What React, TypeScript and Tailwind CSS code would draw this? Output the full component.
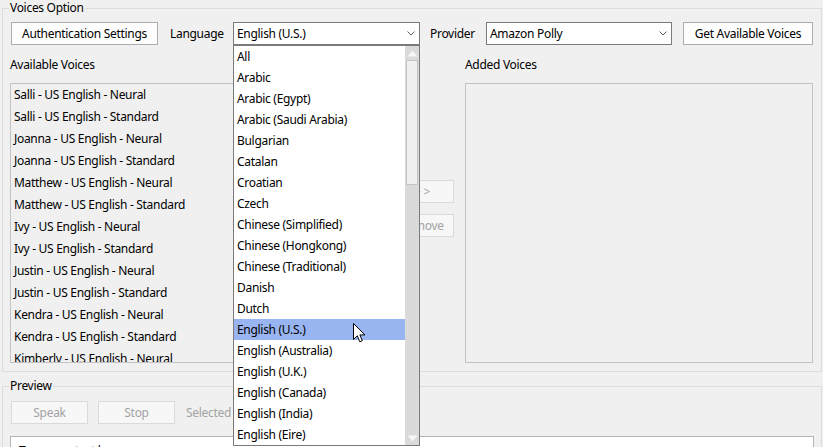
const languages = [
  'All',
  'Arabic',
  'Arabic (Egypt)',
  'Arabic (Saudi Arabia)',
  'Bulgarian',
  'Catalan',
  'Croatian',
  'Czech',
  'Chinese (Simplified)',
  'Chinese (Hongkong)',
  'Chinese (Traditional)',
  'Danish',
  'Dutch',
  'English (U.S.)',
  'English (Australia)',
  'English (U.K.)',
  'English (Canada)',
  'English (India)',
  'English (Eire)',
];

const voices = [
  'Salli - US English - Neural',
  'Salli - US English - Standard',
  'Joanna - US English - Neural',
  'Joanna - US English - Standard',
  'Matthew - US English - Neural',
  'Matthew - US English - Standard',
  'Ivy - US English - Neural',
  'Ivy - US English - Standard',
  'Justin - US English - Neural',
  'Justin - US English - Standard',
  'Kendra - US English - Neural',
  'Kendra - US English - Standard',
  'Kimberly - US English - Neural',
  'Kimberly - US English - Standard',
];

function Chevron() {
  return (
    <svg width="8" height="5" viewBox="0 0 8 5" className="shrink-0">
      <polyline points="0.5,0.5 4,4 7.5,0.5" fill="none" stroke="#606060" strokeWidth="1" />
    </svg>
  );
}

function Combo({ value, width }: { value: string; width: string }) {
  return (
    <div className={`${width} flex h-[23px] items-center justify-between border border-[#7a7a7a] bg-white pl-[3px] pr-[4px]`}>
      <span className="whitespace-nowrap">{value}</span>
      <Chevron />
    </div>
  );
}

function Button({ label, width, disabled }: { label: string; width: string; disabled?: boolean }) {
  return (
    <div
      className={`${width} flex h-[23px] shrink-0 items-center justify-center whitespace-nowrap border ${
        disabled ? 'border-[#dadada] bg-[#f7f7f7] text-[#a3a3a3]' : 'border-[#adadad] bg-[#fdfdfd]'
      }`}
    >
      {label}
    </div>
  );
}

export default function App() {
  return (
    <div className="relative h-[447px] w-[823px] overflow-hidden bg-[#f0f0f0] font-['Noto_Sans',sans-serif] text-[12px] leading-[16px] tracking-[-0.3px] text-black">
      <fieldset className="mx-[2px] w-[820px] min-w-0 border border-[#dcdcdc] px-[7px] pb-[8px]">
        <legend className="-ml-[1px] px-[1px]">Voices Option</legend>

        <div className="mt-[6px] flex h-[23px] items-center">
          <Button label="Authentication Settings" width="ml-[1px] w-[147px]" />
          <span className="ml-[12px] w-[63px]">Language</span>
          <Combo value="English (U.S.)" width="w-[187px]" />
          <span className="ml-[10px] w-[56px]">Provider</span>
          <Combo value="Amazon Polly" width="w-[186px]" />
          <Button label="Get Available Voices" width="ml-[11px] w-[130px]" />
        </div>

        <div className="mt-[12px] flex">
          <div className="w-[368px]">
            <div>Available Voices</div>
            <div className="mt-[10px] h-[280px] overflow-hidden border border-[#c3c3c3]">
              {voices.map((voice) => (
                <div key={voice} className="flex h-[22px] items-center whitespace-nowrap pl-[3px]">
                  {voice}
                </div>
              ))}
            </div>
          </div>

          <div className="ml-[12px] flex w-[64px] flex-col gap-[11px] pt-[123px]">
            <Button label="> >" width="w-[64px]" disabled />
            <Button label="Remove" width="w-[64px]" disabled />
          </div>

          <div className="ml-[11px] w-[348px]">
            <div>Added Voices</div>
            <div className="mt-[10px] h-[280px] border border-[#c3c3c3]" />
          </div>
        </div>
      </fieldset>

      <fieldset className="mx-[2px] mt-[6px] w-[820px] min-w-0 border border-[#dcdcdc] px-[7px]">
        <legend className="-ml-[1px] px-[1px]">Preview</legend>
        <div className="mt-[7px] flex h-[23px] items-center">
          <Button label="Speak" width="ml-[1px] w-[77px]" disabled />
          <Button label="Stop" width="ml-[10px] w-[77px]" disabled />
          <span className="ml-[11px] text-[#a3a3a3]">Selected Voice:</span>
        </div>
        <div className="mt-[12px] h-[60px] border border-[#b4b4b4] bg-white pl-[8px] pt-[6px]">
          Type your text here
        </div>
      </fieldset>

      {/* open language dropdown */}
      <div className="absolute left-[233px] top-[45px] flex h-[401px] w-[187px] border border-[#7a7a7a] bg-white">
        <div className="w-[171px]">
          {languages.map((lang) => (
            <div
              key={lang}
              className={`flex h-[21px] items-center whitespace-nowrap pl-[3px] ${
                lang === 'English (U.S.)' ? 'bg-[#99b5f1]' : ''
              }`}
            >
              {lang}
            </div>
          ))}
        </div>
        <div className="flex w-[14px] flex-col bg-[#dadada]">
          <div className="flex h-[14px] items-center justify-center">
            <svg width="11" height="7" viewBox="0 0 11 7">
              <polygon points="5.5,0.5 10.5,6.5 0.5,6.5" fill="#f6f6f6" />
            </svg>
          </div>
          <div className="mx-[1px] h-[125px] border border-[#c4c4c4] bg-[#f0f0f0]" />
          <div className="flex-1" />
          <div className="flex h-[14px] items-center justify-center">
            <svg width="11" height="7" viewBox="0 0 11 7">
              <polygon points="0.5,0.5 10.5,0.5 5.5,6.5" fill="#f6f6f6" />
            </svg>
          </div>
        </div>
      </div>

      {/* mouse pointer */}
      <svg className="absolute left-[353px] top-[323px]" width="13" height="21" viewBox="0 0 13 21">
        <path
          d="M0.5 0.5 L0.5 16.5 L4.3 12.8 L6.8 18.8 L9.3 17.7 L6.9 11.9 L12 11.9 Z"
          fill="white"
          stroke="black"
          strokeWidth="1"
          strokeLinejoin="miter"
        />
      </svg>
    </div>
  );
}
